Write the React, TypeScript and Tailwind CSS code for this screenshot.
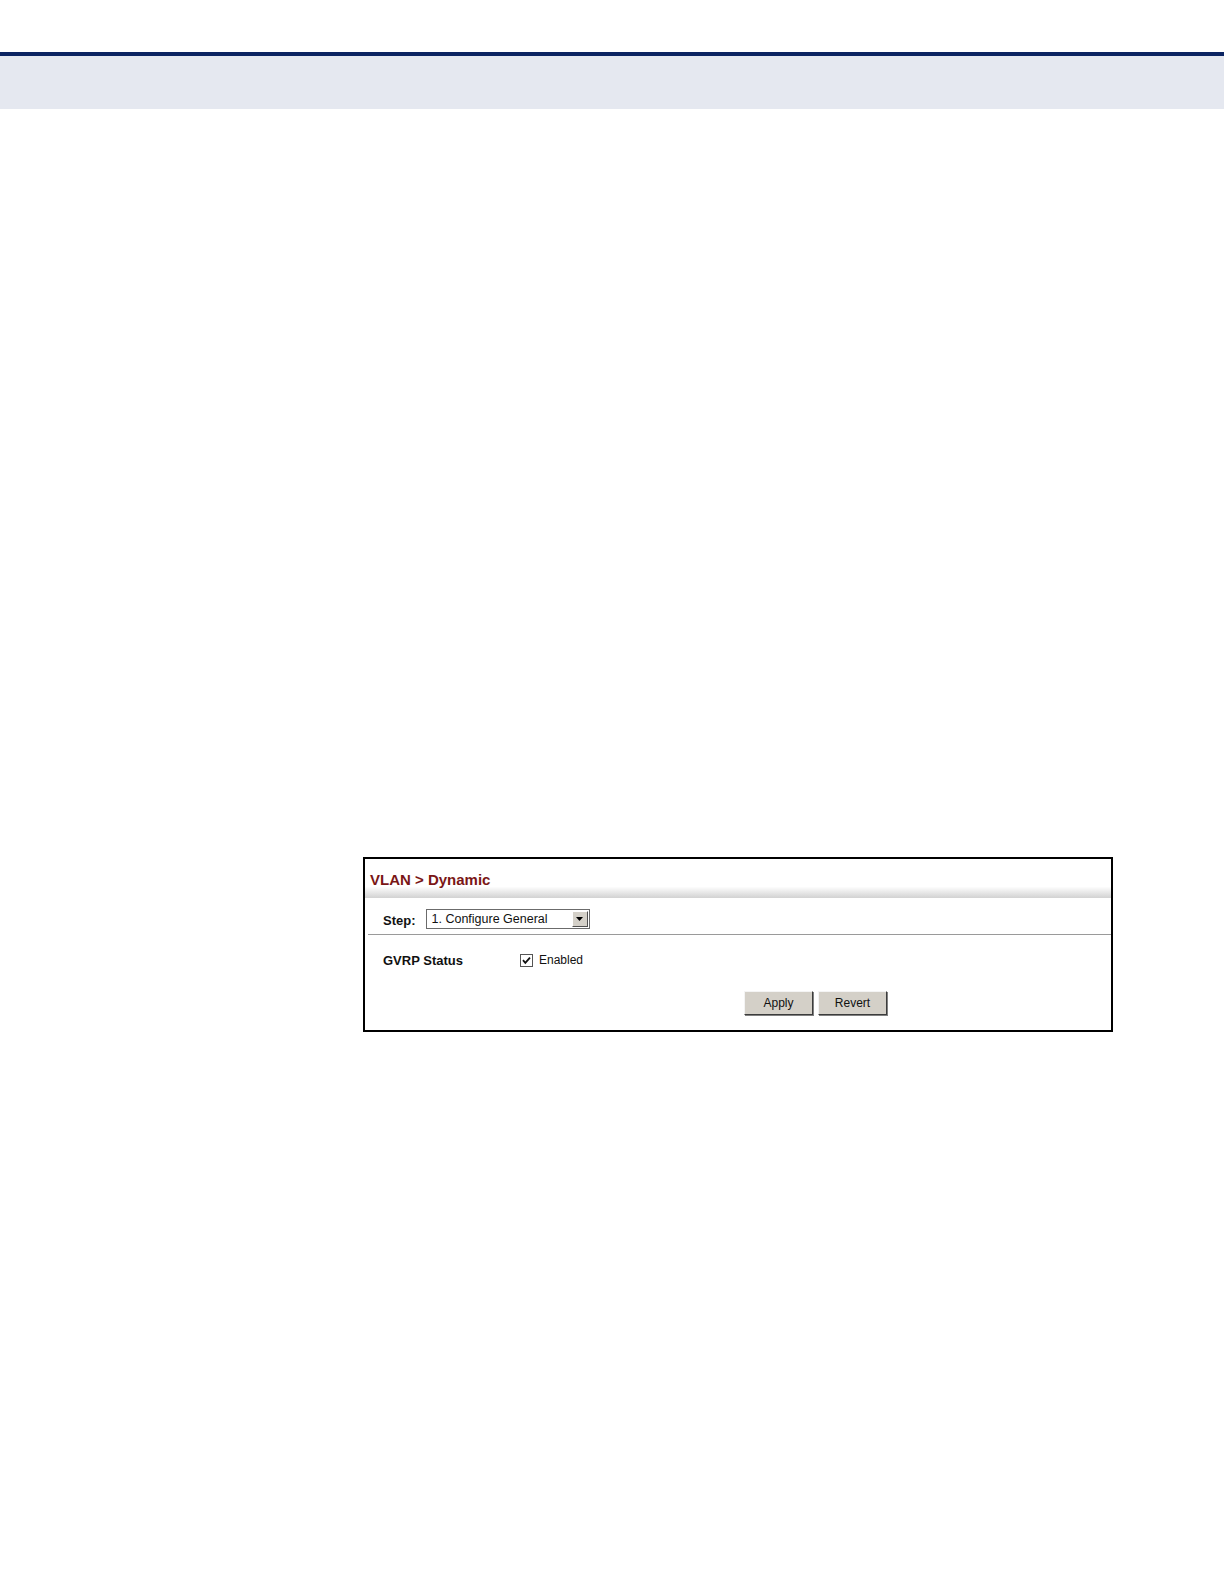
import React from "react";

const ui = { fontFamily: '"Liberation Sans", Arial, sans-serif' };

function Checkbox() {
  return (
    <svg width="13" height="13" viewBox="0 0 13 13" className="block">
      <rect x="0.5" y="0.5" width="12" height="12" fill="#fff" stroke="#555" />
      <path d="M3 6.2 L5.3 8.8 L10 3.6" fill="none" stroke="#111" strokeWidth="1.8" />
    </svg>
  );
}

function StepSelect() {
  return (
    <div className="flex h-[20px] w-[164px] items-stretch border border-[#6b6b6b] bg-white">
      <div className="flex flex-1 items-center pl-[5px] text-[12.5px] text-[#111]">1. Configure General</div>
      <div className="m-[1px] flex w-[16px] items-center justify-center border-t border-l border-b border-r border-t-white border-l-white border-b-[#505050] border-r-[#505050] bg-[#d4d0c8]">
        <svg width="7" height="4" viewBox="0 0 7 4">
          <path d="M0 0 H7 L3.5 4 Z" fill="#000" />
        </svg>
      </div>
    </div>
  );
}

function Button({ label }: { label: string }) {
  return (
    <button className="h-[24px] w-[69px] border border-t-[#f4f4f4] border-l-[#f4f4f4] border-b-[#3c3c3c] border-r-[#3c3c3c] bg-[#d4d0c8] text-[12px] text-[#111] shadow-[1px_1px_0_#808080]">
      {label}
    </button>
  );
}

export default function App() {
  return (
    <div className="min-h-[1584px] w-[1224px] bg-white" style={ui}>
      <div className="pt-[52px]">
        <div className="h-[4px] bg-[#0b2462]" />
        <div className="h-[53px] bg-[#e5e8f0]" />
      </div>

      <div className="ml-[363px] mt-[748px] w-[750px] border-2 border-black bg-white">
        <div className="pl-[5px] pt-[12px] text-[15px] font-bold leading-[18px] text-[#7a1616]">VLAN &gt; Dynamic</div>
        <div className="mt-[-2px] h-[11px] bg-gradient-to-b from-[#fdfdfd] to-[#d2d2d2]" />

        <div className="flex items-center gap-[10px] pl-[18px] pt-[10px] pb-[3px]">
          <span className="pt-[3px] text-[13px] font-bold text-[#111]">Step:</span>
          <StepSelect />
        </div>
        <div className="ml-[3px] h-px bg-[#9a9a9a]" />

        <div className="flex items-center pl-[18px] pt-[16px]">
          <span className="w-[137px] text-[13px] font-bold text-[#111]">GVRP Status</span>
          <Checkbox />
          <span className="pl-[6px] text-[12px] text-[#111]">Enabled</span>
        </div>

        <div className="flex gap-[5px] pl-[379px] pt-[21px] pb-[15px]">
          <Button label="Apply" />
          <Button label="Revert" />
        </div>
      </div>
    </div>
  );
}
